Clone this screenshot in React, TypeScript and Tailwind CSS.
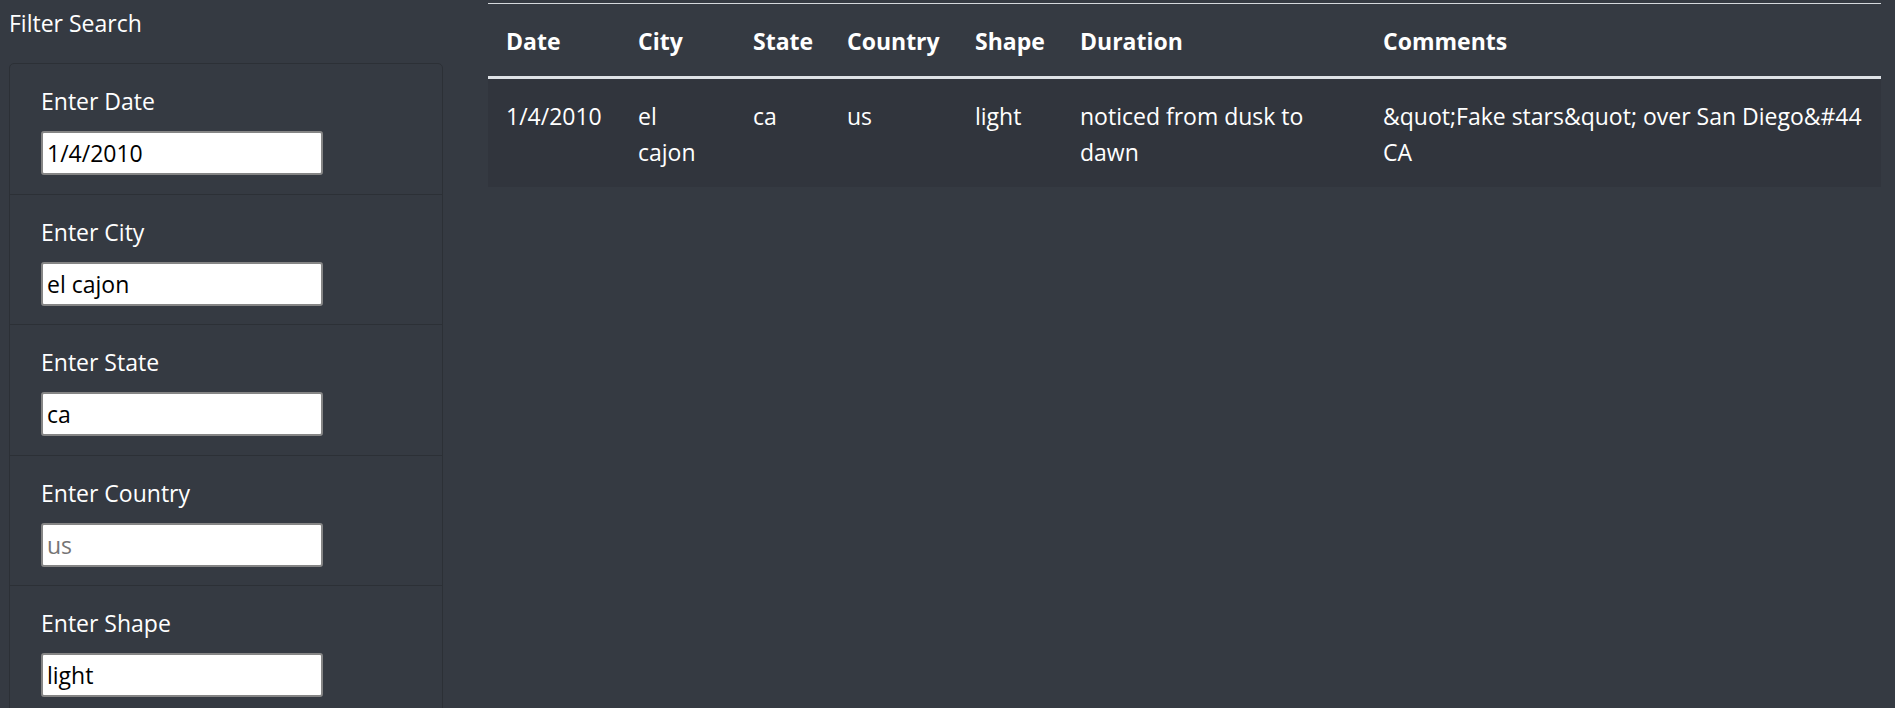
import React from "react";

const fields = [
  { label: "Enter Date", value: "1/4/2010", placeholder: "" },
  { label: "Enter City", value: "el cajon", placeholder: "" },
  { label: "Enter State", value: "ca", placeholder: "" },
  { label: "Enter Country", value: "", placeholder: "us" },
  { label: "Enter Shape", value: "light", placeholder: "" },
];

const cols = [
  { name: "Date", w: "w-[132px]" },
  { name: "City", w: "w-[115px]" },
  { name: "State", w: "w-[94px]" },
  { name: "Country", w: "w-[128px]" },
  { name: "Shape", w: "w-[105px]" },
  { name: "Duration", w: "w-[303px]" },
  { name: "Comments", w: "w-[516px]" },
];

export default function App() {
  return (
    <div className="h-[708px] w-full overflow-hidden bg-[#353a42] text-white font-['Open_Sans',sans-serif] text-[23px] leading-[36px]">
      <div className="flex items-start">
        <aside className="ml-[9px] w-[434px] shrink-0 pt-[5px]">
          <div className="h-[36px]">Filter Search</div>
          <div className="mt-[22px] rounded-[5px] border border-[#2c3036]">
            {fields.map((f, i) => (
              <div
                key={f.label}
                className={
                  i === 0
                    ? "pl-[31px] pt-[19px] pb-[18.5px]"
                    : "border-t border-[#2c3036] pl-[31px] pt-[19px] pb-[18.5px]"
                }
              >
                <label className="block h-[36px] mb-[12px]">{f.label}</label>
                <input
                  type="text"
                  defaultValue={f.value}
                  placeholder={f.placeholder}
                  className="block h-[44px] w-[282px] rounded-[3px] border-2 border-[#858585] bg-white pl-[4px] text-[23px] text-black placeholder:text-[#757575] outline-none font-['Open_Sans',sans-serif]"
                />
              </div>
            ))}
          </div>
        </aside>
        <main className="ml-[45px] pt-[3px]">
          <table className="table-fixed w-[1393px] border-separate border-spacing-0">
            <colgroup>
              {cols.map((c) => (
                <col key={c.name} className={c.w} />
              ))}
            </colgroup>
            <thead>
              <tr>
                {cols.map((c) => (
                  <th
                    key={c.name}
                    className="border-t border-b-[3px] border-t-[#d5d8dc] border-b-[#dee2e6] px-[18px] pt-[19px] pb-[17px] text-left align-bottom font-bold"
                  >
                    {c.name}
                  </th>
                ))}
              </tr>
            </thead>
            <tbody>
              <tr className="bg-[#31353d]">
                <td className="px-[18px] pt-[19px] pb-[17px] align-top">1/4/2010</td>
                <td className="px-[18px] pt-[19px] pb-[17px] align-top">
                  el
                  <br />
                  cajon
                </td>
                <td className="px-[18px] pt-[19px] pb-[17px] align-top">ca</td>
                <td className="px-[18px] pt-[19px] pb-[17px] align-top">us</td>
                <td className="px-[18px] pt-[19px] pb-[17px] align-top">light</td>
                <td className="px-[18px] pt-[19px] pb-[17px] align-top">
                  noticed from dusk to
                  <br />
                  dawn
                </td>
                <td className="px-[18px] pt-[19px] pb-[17px] align-top whitespace-nowrap">
                  &amp;quot;Fake stars&amp;quot; over San Diego&amp;#44
                  <br />
                  CA
                </td>
              </tr>
            </tbody>
          </table>
        </main>
      </div>
    </div>
  );
}
